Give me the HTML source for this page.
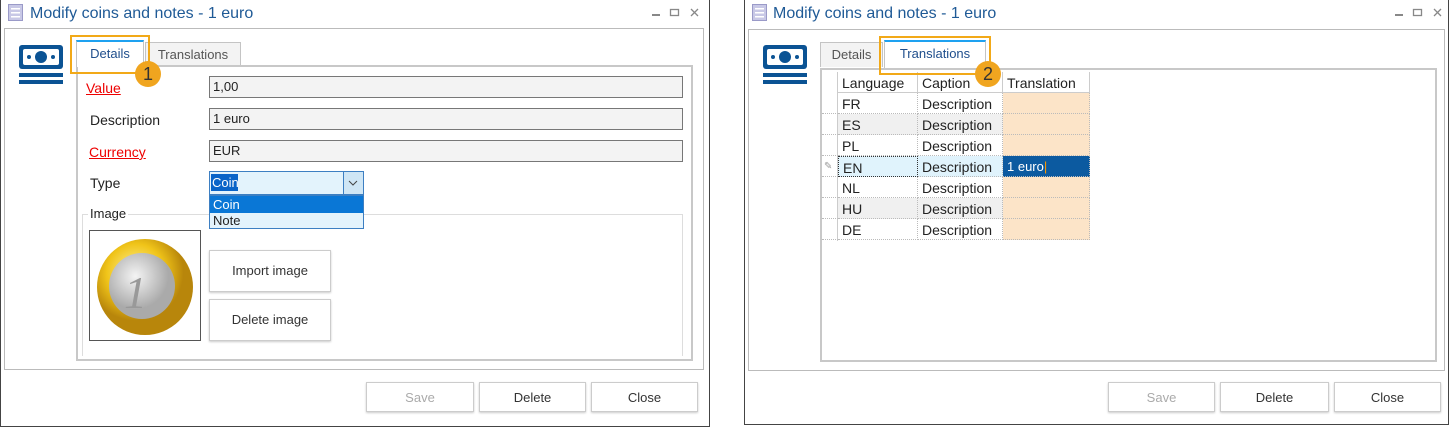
<!DOCTYPE html>
<html><head><meta charset="utf-8"><style>
*{box-sizing:border-box;margin:0;padding:0}
body{width:1449px;height:427px;background:#fff;position:relative;overflow:hidden;font-family:"Liberation Sans",sans-serif;font-size:13px;color:#222}
.a{position:absolute}
.win{position:absolute;border:1.5px solid #444;background:#fff}
.title{position:absolute;font-size:16px;color:#1f5a96}
.frame{position:absolute;border:1px solid #bbb}
.tab{position:absolute;border:1px solid #c4c4c4;border-bottom:none;text-align:center;font-size:13px;line-height:24px}
.panel{position:absolute;border:2px solid #c8c8c8}
.inp{position:absolute;height:22px;border:1px solid #777;background:#f3f3f3;padding-left:3px;line-height:20px;font-size:13px}
.lbl{position:absolute;font-size:14px}
.red{color:#e00;text-decoration:underline}
.btn{position:absolute;border:1px solid #ccc;box-shadow:0 1px 2px #ccc;background:#fff;text-align:center;font-size:13px;color:#333}
.orange{position:absolute;border:2px solid #f2a918}
.badge{position:absolute;width:26px;height:26px;border-radius:50%;background:#f0a51f;color:#333;font-size:18px;text-align:center;line-height:26px}
.cell{position:absolute;height:21px;line-height:22px;font-size:14px;padding-left:4px;border-right:1px dotted #bbb;border-bottom:1px dotted #bbb}
</style></head><body>

<!-- window 1 -->
<div class="win" style="left:0;top:-1px;width:710px;height:428px"></div>
<svg class="a" style="left:8px;top:4px" width="15" height="17"><rect x="0.5" y="0.5" width="14" height="16" fill="#c8c8e6" stroke="#9a9ac8"/><rect x="3" y="4" width="9" height="1.5" fill="#fff"/><rect x="3" y="8" width="9" height="1.5" fill="#fff"/><rect x="3" y="12" width="9" height="1.5" fill="#fff"/></svg>
<div class="title" style="left:30px;top:5px">Modify coins and notes - 1 euro</div>
<svg class="a" style="left:650px;top:6px" width="52" height="14"><rect x="2" y="8" width="8" height="2" fill="#888"/><rect x="20.5" y="3.5" width="8" height="6" fill="none" stroke="#888" stroke-width="1.3"/><path d="M41 3 L48 10 M48 3 L41 10" stroke="#888" stroke-width="1.3"/></svg>
<div class="a" style="left:4px;top:28px;width:700px;height:1px;background:#bbb"></div>
<div class="frame" style="left:4px;top:29px;width:700px;height:341px;border-top:none"></div>
<svg class="a" style="left:18px;top:45px" width="46" height="42"><rect x="1" y="0" width="44" height="24" rx="3" fill="#0b5394"/><rect x="5" y="4" width="36" height="16" rx="2" fill="#fff"/><circle cx="23" cy="12" r="6" fill="#0b5394"/><circle cx="11" cy="12" r="2" fill="#0b5394"/><circle cx="35" cy="12" r="2" fill="#0b5394"/><rect x="1" y="28" width="44" height="4" fill="#0b5394"/><rect x="1" y="35" width="44" height="4" fill="#0b5394"/></svg>
<div class="tab" style="left:76px;top:40px;width:68px;height:27px;border-top:2px solid #1ea1f0;background:#fff;color:#1f4e8c;z-index:2">Details</div>
<div class="tab" style="left:145px;top:42px;width:96px;height:24px;background:#f3f3f3;color:#555">Translations</div>
<div class="panel" style="left:76px;top:65px;width:617px;height:296px"></div>
<div class="orange" style="left:70px;top:35px;width:80px;height:39px;z-index:3"></div>
<div class="badge" style="left:135px;top:61px;z-index:4">1</div>
<div class="lbl red" style="left:86px;top:80px">Value</div>
<div class="inp" style="left:209px;top:76px;width:474px">1,00</div>
<div class="lbl" style="left:90px;top:112px">Description</div>
<div class="inp" style="left:209px;top:108px;width:474px">1 euro</div>
<div class="lbl red" style="left:89px;top:144px">Currency</div>
<div class="inp" style="left:209px;top:140px;width:474px">EUR</div>
<div class="lbl" style="left:90px;top:175px">Type</div>
<div class="a" style="left:209px;top:171px;width:155px;height:24px;border:1px solid #3d7fc2;background:#e3f3fc"></div>
<div class="a" style="left:211px;top:174px;width:27px;height:17px;background:#0a64c8;color:#fff;font-size:13px;line-height:17px;padding-left:1px">Coin</div>
<div class="a" style="left:343px;top:172px;width:20px;height:22px;border-left:1px solid #3d7fc2;background:#cfe6f5"></div>
<svg class="a" style="left:348px;top:179px" width="10" height="8"><path d="M1 2 L5 6 L9 2" fill="none" stroke="#444" stroke-width="1"/></svg>
<div class="a" style="left:82px;top:214px;width:601px;height:142px;border:1px solid #ddd;border-bottom:none"></div>
<div class="lbl" style="left:88px;top:206px;background:#fff;padding:0 2px;font-size:13px">Image</div>
<div class="a" style="left:209px;top:195px;width:155px;height:34px;border:1px solid #3d7fc2;background:#e3f3fc;z-index:2"><div style="background:#0a77d6;color:#fff;height:17px;line-height:17px;padding-left:3px">Coin</div><div style="height:15px;line-height:15px;padding-left:3px">Note</div></div>
<div class="a" style="left:89px;top:230px;width:112px;height:111px;border:1px solid #555"></div>
<svg class="a" style="left:96px;top:238px" width="98" height="98"><defs><radialGradient id="g" cx="40%" cy="35%"><stop offset="0" stop-color="#fff6a0"/><stop offset=".6" stop-color="#f0c419"/><stop offset="1" stop-color="#b8860b"/></radialGradient><radialGradient id="s" cx="40%" cy="35%"><stop offset="0" stop-color="#f4f4f4"/><stop offset="1" stop-color="#aaa"/></radialGradient></defs><circle cx="49" cy="49" r="48" fill="url(#g)"/><circle cx="46" cy="48" r="33" fill="url(#s)"/><text x="28" y="70" font-size="46" font-family="Liberation Serif" fill="#999" font-style="italic">1</text></svg>
<div class="btn" style="left:209px;top:250px;width:122px;height:42px;line-height:40px">Import image</div>
<div class="btn" style="left:209px;top:299px;width:122px;height:42px;line-height:40px">Delete image</div>
<div class="btn" style="left:366px;top:382px;width:108px;height:30px;line-height:29px;color:#aaa">Save</div>
<div class="btn" style="left:479px;top:382px;width:107px;height:30px;line-height:29px">Delete</div>
<div class="btn" style="left:591px;top:382px;width:107px;height:30px;line-height:29px">Close</div>

<!-- window 2 -->
<div class="win" style="left:744px;top:-1px;width:705px;height:426px"></div>
<svg class="a" style="left:752px;top:4px" width="15" height="17"><rect x="0.5" y="0.5" width="14" height="16" fill="#c8c8e6" stroke="#9a9ac8"/><rect x="3" y="4" width="9" height="1.5" fill="#fff"/><rect x="3" y="8" width="9" height="1.5" fill="#fff"/><rect x="3" y="12" width="9" height="1.5" fill="#fff"/></svg>
<div class="title" style="left:773px;top:5px">Modify coins and notes - 1 euro</div>
<svg class="a" style="left:1393px;top:6px" width="52" height="14"><rect x="2" y="8" width="8" height="2" fill="#888"/><rect x="20.5" y="3.5" width="8" height="6" fill="none" stroke="#888" stroke-width="1.3"/><path d="M41 3 L48 10 M48 3 L41 10" stroke="#888" stroke-width="1.3"/></svg>
<div class="a" style="left:748px;top:29px;width:697px;height:1px;background:#bbb"></div>
<div class="frame" style="left:748px;top:30px;width:697px;height:341px;border-top:none"></div>
<svg class="a" style="left:762px;top:45px" width="46" height="42"><rect x="1" y="0" width="44" height="24" rx="3" fill="#0b5394"/><rect x="5" y="4" width="36" height="16" rx="2" fill="#fff"/><circle cx="23" cy="12" r="6" fill="#0b5394"/><circle cx="11" cy="12" r="2" fill="#0b5394"/><circle cx="35" cy="12" r="2" fill="#0b5394"/><rect x="1" y="28" width="44" height="4" fill="#0b5394"/><rect x="1" y="35" width="44" height="4" fill="#0b5394"/></svg>
<div class="tab" style="left:820px;top:42px;width:63px;height:25px;background:#f3f3f3;color:#555">Details</div>
<div class="tab" style="left:884px;top:40px;width:102px;height:28px;border-top:2px solid #1ea1f0;background:#fff;color:#1f4e8c;z-index:2">Translations</div>
<div class="panel" style="left:820px;top:68px;width:617px;height:294px"></div>
<div class="orange" style="left:879px;top:36px;width:112px;height:39px;z-index:3"></div>
<div class="badge" style="left:975px;top:61px;z-index:4">2</div>
<!-- grid -->
<div class="cell" style="left:838px;top:72px;width:80px;border-right:1px solid #ccc;border-bottom:1px solid #ccc">Language</div>
<div class="cell" style="left:918px;top:72px;width:85px;border-right:1px solid #ccc;border-bottom:1px solid #ccc">Caption</div>
<div class="cell" style="left:1003px;top:72px;width:87px;border-right:1px solid #ccc;border-bottom:1px solid #ccc">Translation</div>
<div class="a" style="left:822px;top:72px;width:16px;height:169px;border-right:1px solid #ccc"></div>

<div class="cell" style="left:822px;top:93px;width:16px;border-right:1px solid #ccc"></div><div class="cell" style="left:838px;top:93px;width:80px">FR</div><div class="cell" style="left:918px;top:93px;width:85px">Description</div><div class="cell" style="left:1003px;top:93px;width:87px;background:#fce4c8"></div>
<div class="cell" style="left:822px;top:114px;width:16px;border-right:1px solid #ccc"></div><div class="cell" style="left:838px;top:114px;width:80px;background:#f0f0f0">ES</div><div class="cell" style="left:918px;top:114px;width:85px;background:#f0f0f0">Description</div><div class="cell" style="left:1003px;top:114px;width:87px;background:#fce4c8"></div>
<div class="cell" style="left:822px;top:135px;width:16px;border-right:1px solid #ccc"></div><div class="cell" style="left:838px;top:135px;width:80px">PL</div><div class="cell" style="left:918px;top:135px;width:85px">Description</div><div class="cell" style="left:1003px;top:135px;width:87px;background:#fce4c8"></div>
<div class="cell" style="left:822px;top:156px;width:16px;border-right:1px solid #ccc;color:#999;font-size:10px;padding-left:2px">✎</div><div class="cell" style="left:838px;top:156px;width:80px;background:#e0f3fc;border:1px dotted #333">EN</div><div class="cell" style="left:918px;top:156px;width:85px;background:#e0f3fc">Description</div><div class="cell" style="left:1003px;top:156px;width:87px;background:#0c5aa0;color:#fff;font-size:13px">1 euro<span style="color:#f90">|</span></div>
<div class="cell" style="left:822px;top:177px;width:16px;border-right:1px solid #ccc"></div><div class="cell" style="left:838px;top:177px;width:80px">NL</div><div class="cell" style="left:918px;top:177px;width:85px">Description</div><div class="cell" style="left:1003px;top:177px;width:87px;background:#fce4c8"></div>
<div class="cell" style="left:822px;top:198px;width:16px;border-right:1px solid #ccc"></div><div class="cell" style="left:838px;top:198px;width:80px;background:#f0f0f0">HU</div><div class="cell" style="left:918px;top:198px;width:85px;background:#f0f0f0">Description</div><div class="cell" style="left:1003px;top:198px;width:87px;background:#fce4c8"></div>
<div class="cell" style="left:822px;top:219px;width:16px;border-right:1px solid #ccc"></div><div class="cell" style="left:838px;top:219px;width:80px">DE</div><div class="cell" style="left:918px;top:219px;width:85px">Description</div><div class="cell" style="left:1003px;top:219px;width:87px;background:#fce4c8"></div>

<div class="btn" style="left:1108px;top:382px;width:107px;height:30px;line-height:29px;color:#aaa">Save</div>
<div class="btn" style="left:1220px;top:382px;width:109px;height:30px;line-height:29px">Delete</div>
<div class="btn" style="left:1334px;top:382px;width:107px;height:30px;line-height:29px">Close</div>
</body></html>
